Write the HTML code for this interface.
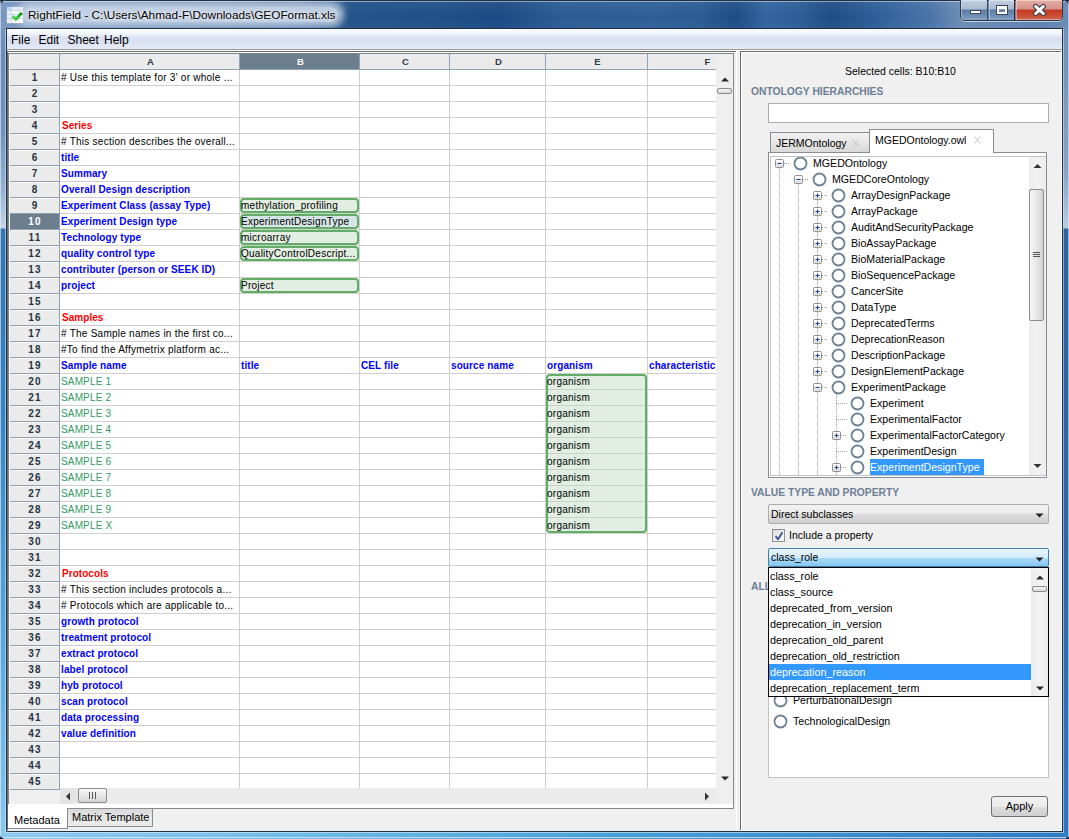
<!DOCTYPE html><html><head><meta charset="utf-8"><title>RightField</title><style>
*{margin:0;padding:0;box-sizing:border-box}
html,body{width:1069px;height:839px;overflow:hidden;background:#1b2b40}
body{position:relative;font-family:"Liberation Sans", sans-serif;font-size:11px;color:#000}
.ab{position:absolute}
.t{position:absolute;white-space:nowrap;overflow:hidden}
</style></head><body>
<div class="ab" style="left:0;top:0;width:1069px;height:839px;border-radius:7px 7px 6px 6px;background:linear-gradient(180deg,#7b98c0 0px,#6a8db8 60px,#7092bc 130px,#98b2d4 190px,#c3d4e8 228px,#3674b2 229px,#3a82c0 400px,#5aa6dc 640px,#8ac8ee 839px);"></div>
<div class="ab" style="left:1062px;top:20px;width:7px;height:812px;background:linear-gradient(180deg,#6f8fb9 0px,#86a3c6 150px,#b8cbe2 208px,#2c62a0 209px,#2e67a6 500px,#3276b9 812px)"></div>
<div class="ab" style="left:0;top:831px;width:1069px;height:8px;border-radius:0 0 6px 6px;background:linear-gradient(90deg,#8ccaf0 0px,#7cc2ec 200px,#5fb0e2 420px,#4aa0d8 600px,#3f90cf 800px,#2f7cc0 1069px)"></div>
<div class="ab" style="left:0;top:1px;width:1px;height:836px;background:rgba(230,240,250,.6)"></div>
<div class="ab" style="left:1068px;top:1px;width:1px;height:836px;background:rgba(230,240,250,.6)"></div>
<div class="ab" style="left:5px;top:29px;width:1px;height:803px;background:rgba(220,235,250,.55)"></div>
<div class="ab" style="left:1063px;top:29px;width:1px;height:803px;background:rgba(220,235,250,.55)"></div>
<div class="ab" style="left:5px;top:832px;width:1059px;height:1px;background:rgba(220,235,250,.6)"></div>
<div class="ab" style="left:3px;top:837px;width:1063px;height:1px;background:rgba(230,240,250,.7)"></div>
<div class="ab" style="left:1px;top:1px;width:1067px;height:27px;border-radius:6px 6px 0 0;overflow:hidden;background:linear-gradient(90deg,#7995bd 0px,#6a89b3 150px,#4f75a6 300px,#225389 345px,#1f5088 430px,#1b4a84 500px,#2a5c93 560px,#2d5f96 650px,#2a5b92 700px,#1d4c84 735px,#3264a0 765px,#2b5c95 800px,#1e4c85 830px,#2f609a 880px,#4a74a8 930px,#6a8cb5 960px,#5d80ad 1040px,#6a8ab5 1067px);"><div class="ab" style="left:20px;top:6px;width:318px;height:15px;border-radius:8px;background:rgba(196,211,229,.92);box-shadow:0 0 7px 5px rgba(196,211,229,.85)"></div></div>
<div class="ab" style="left:1px;top:1px;width:1067px;height:27px;border-radius:6px 6px 0 0;background:linear-gradient(180deg,rgba(255,255,255,.06) 0px,rgba(255,255,255,.02) 10px,rgba(255,255,255,0) 16px,rgba(255,255,255,.03) 27px)"></div>
<div class="ab" style="left:4px;top:1px;width:1061px;height:1px;background:rgba(255,255,255,.45)"></div>
<div class="ab" style="left:7px;top:7px;width:16px;height:16px;background:#fbfcfe;box-shadow:0 0 0 .5px rgba(190,200,215,.6)"></div>
<div class="ab" style="left:7px;top:7px;width:4px;height:16px;background:#e8f0f9"></div>
<div class="ab" style="left:12px;top:7px;width:11px;height:3px;background:#e2edf9"></div>
<div class="ab" style="left:7px;top:7px;width:4px;height:3px;background:#b3d5fd"></div>
<div class="ab" style="left:7px;top:10px;width:16px;height:1px;background:#cad6e6"></div>
<div class="ab" style="left:7px;top:14px;width:16px;height:1px;background:#cad6e6"></div>
<div class="ab" style="left:7px;top:18px;width:16px;height:1px;background:#cad6e6"></div>
<div class="ab" style="left:11px;top:7px;width:1px;height:16px;background:#cad6e6"></div>
<svg class="ab" style="left:10px;top:10px" width="14" height="12" viewBox="0 0 14 12"><defs><linearGradient id="ck" x1="0" y1="0" x2="1" y2="0"><stop offset="0" stop-color="#52d852"/><stop offset=".5" stop-color="#3cc83c"/><stop offset="1" stop-color="#0d8d0d"/></linearGradient></defs><path d="M2.6 6.2 L5.9 9.3 L11.8 2.8" stroke="url(#ck)" stroke-width="3" fill="none" stroke-linejoin="round"/></svg>
<div class="t" style="left:28px;top:7px;height:16px;line-height:16px;font-size:11.8px;color:#000;text-shadow:0 0 6px #fff,0 0 3px rgba(255,255,255,.9)">RightField - C:\Users\Ahmad-F\Downloads\GEOFormat.xls</div>
<div class="ab" style="left:5px;top:0;width:1059px;height:1px;background:rgba(15,28,48,.85)"></div>
<div class="ab" style="left:960px;top:0;width:103px;height:21px;border:1px solid #2c3a4c;border-top:none;border-radius:0 0 5px 5px;overflow:hidden;box-shadow:0 1px 0 rgba(220,232,245,.75)"><div class="ab" style="left:0;top:0;width:27px;height:20px;background:linear-gradient(180deg,#c3d1e2 0,#a9bbd1 9px,#5d7da5 10px,#6f8fb5 16px,#86a4c6 20px);border-right:1px solid #34465a;box-shadow:inset 1px 1px 0 rgba(255,255,255,.35)"></div><div class="ab" style="left:28px;top:0;width:26px;height:20px;background:linear-gradient(180deg,#c3d1e2 0,#a9bbd1 9px,#5d7da5 10px,#6f8fb5 16px,#86a4c6 20px);border-right:1px solid #5a1a14;box-shadow:inset 1px 1px 0 rgba(255,255,255,.35)"></div><div class="ab" style="left:55px;top:0;width:47px;height:20px;background:linear-gradient(180deg,#e4aea4 0,#d6918a 9px,#c23a22 10px,#c94a30 15px,#cf6a54 20px);box-shadow:inset 1px 1px 0 rgba(255,255,255,.4),inset -1px -1px 0 rgba(255,255,255,.35)"></div></div>
<div class="ab" style="left:970px;top:10px;width:11px;height:4px;background:#fff;border:1px solid #384858"></div>
<div class="ab" style="left:996px;top:5px;width:12px;height:10px;background:transparent;border:1px solid #384858"></div>
<div class="ab" style="left:997px;top:6px;width:10px;height:8px;border:2px solid #fff;border-top-width:3px"></div>
<svg class="ab" style="left:1032px;top:3px" width="15" height="14" viewBox="0 0 15 14"><path d="M3.6 3.4 L11.4 10.6 M11.4 3.4 L3.6 10.6" stroke="#2e3440" stroke-width="5" stroke-linecap="round"/><path d="M3.6 3.4 L11.4 10.6 M11.4 3.4 L3.6 10.6" stroke="#fff" stroke-width="3" stroke-linecap="round"/></svg>
<div class="ab" style="left:6px;top:28px;width:1057px;height:804px;background:#1f3347;border-radius:1px"></div>
<div class="ab" style="left:7px;top:29px;width:1055px;height:802px;background:#f0f0f0"></div>
<div class="ab" style="left:7px;top:29px;width:1055px;height:20px;background:linear-gradient(180deg,#fbfcfe 0px,#f0f3fa 5px,#d8dff0 9px,#dbe2f2 14px,#e6ebf7 20px)"></div>
<div class="ab" style="left:7px;top:49px;width:1055px;height:1px;background:#9a9a9a"></div>
<div class="ab" style="left:7px;top:50px;width:1055px;height:1px;background:#ffffff"></div>
<div class="t" style="left:11px;top:32px;height:16px;line-height:16px;font-size:12px;color:#000">File</div>
<div class="t" style="left:38.5px;top:32px;height:16px;line-height:16px;font-size:12px;color:#000">Edit</div>
<div class="t" style="left:67.5px;top:32px;height:16px;line-height:16px;font-size:12px;color:#000">Sheet</div>
<div class="t" style="left:104px;top:32px;height:16px;line-height:16px;font-size:12px;color:#000">Help</div>
<div class="ab" style="left:7px;top:51px;width:730px;height:1px;background:#6b6b6b"></div>
<div class="ab" style="left:7px;top:51px;width:1px;height:779px;background:#6b6b6b"></div>
<div class="ab" style="left:736px;top:51px;width:1px;height:780px;background:#fff"></div>
<div class="ab" style="left:8px;top:52px;width:728px;height:1px;background:#fff"></div>
<div class="ab" style="left:8px;top:53px;width:726px;height:756px;border:1px solid #828790;background:#fff"></div>
<div class="ab" style="left:9px;top:54px;width:707px;height:734px;background:#fff"></div>
<div class="ab" style="left:9px;top:54px;width:707px;height:15px;background:#ebebeb"></div>
<div class="ab" style="left:9px;top:54px;width:50px;height:736px;background:#ebebeb"></div>
<div class="ab" style="left:9px;top:54px;width:1px;height:734px;background:#fafafa"></div>
<div class="ab" style="left:240px;top:54px;width:119px;height:15px;background:#6c7d8e"></div>
<div class="ab" style="left:10px;top:214px;width:49px;height:15px;background:#6c7d8e"></div>
<div class="ab" style="left:59px;top:54px;width:1px;height:15px;background:#8fa2b3"></div>
<div class="ab" style="left:239px;top:54px;width:1px;height:15px;background:#8fa2b3"></div>
<div class="ab" style="left:359px;top:54px;width:1px;height:15px;background:#8fa2b3"></div>
<div class="ab" style="left:449px;top:54px;width:1px;height:15px;background:#8fa2b3"></div>
<div class="ab" style="left:545px;top:54px;width:1px;height:15px;background:#8fa2b3"></div>
<div class="ab" style="left:647px;top:54px;width:1px;height:15px;background:#8fa2b3"></div>
<div class="ab" style="left:10px;top:69px;width:706px;height:1px;background:#8fa2b3"></div>
<div class="ab" style="left:59px;top:54px;width:1px;height:736px;background:#8fa2b3"></div>
<div class="ab" style="left:10px;top:85px;width:49px;height:1px;background:#8fa2b3"></div>
<div class="ab" style="left:10px;top:86px;width:49px;height:1px;background:#f6f6f6"></div>
<div class="ab" style="left:60px;top:85px;width:656px;height:1px;background:#cfcfcf"></div>
<div class="ab" style="left:10px;top:101px;width:49px;height:1px;background:#8fa2b3"></div>
<div class="ab" style="left:10px;top:102px;width:49px;height:1px;background:#f6f6f6"></div>
<div class="ab" style="left:60px;top:101px;width:656px;height:1px;background:#cfcfcf"></div>
<div class="ab" style="left:10px;top:117px;width:49px;height:1px;background:#8fa2b3"></div>
<div class="ab" style="left:10px;top:118px;width:49px;height:1px;background:#f6f6f6"></div>
<div class="ab" style="left:60px;top:117px;width:656px;height:1px;background:#cfcfcf"></div>
<div class="ab" style="left:10px;top:133px;width:49px;height:1px;background:#8fa2b3"></div>
<div class="ab" style="left:10px;top:134px;width:49px;height:1px;background:#f6f6f6"></div>
<div class="ab" style="left:60px;top:133px;width:656px;height:1px;background:#cfcfcf"></div>
<div class="ab" style="left:10px;top:149px;width:49px;height:1px;background:#8fa2b3"></div>
<div class="ab" style="left:10px;top:150px;width:49px;height:1px;background:#f6f6f6"></div>
<div class="ab" style="left:60px;top:149px;width:656px;height:1px;background:#cfcfcf"></div>
<div class="ab" style="left:10px;top:165px;width:49px;height:1px;background:#8fa2b3"></div>
<div class="ab" style="left:10px;top:166px;width:49px;height:1px;background:#f6f6f6"></div>
<div class="ab" style="left:60px;top:165px;width:656px;height:1px;background:#cfcfcf"></div>
<div class="ab" style="left:10px;top:181px;width:49px;height:1px;background:#8fa2b3"></div>
<div class="ab" style="left:10px;top:182px;width:49px;height:1px;background:#f6f6f6"></div>
<div class="ab" style="left:60px;top:181px;width:656px;height:1px;background:#cfcfcf"></div>
<div class="ab" style="left:10px;top:197px;width:49px;height:1px;background:#8fa2b3"></div>
<div class="ab" style="left:10px;top:198px;width:49px;height:1px;background:#f6f6f6"></div>
<div class="ab" style="left:60px;top:197px;width:656px;height:1px;background:#cfcfcf"></div>
<div class="ab" style="left:10px;top:213px;width:49px;height:1px;background:#8fa2b3"></div>
<div class="ab" style="left:60px;top:213px;width:656px;height:1px;background:#cfcfcf"></div>
<div class="ab" style="left:10px;top:229px;width:49px;height:1px;background:#8fa2b3"></div>
<div class="ab" style="left:10px;top:230px;width:49px;height:1px;background:#f6f6f6"></div>
<div class="ab" style="left:60px;top:229px;width:656px;height:1px;background:#cfcfcf"></div>
<div class="ab" style="left:10px;top:245px;width:49px;height:1px;background:#8fa2b3"></div>
<div class="ab" style="left:10px;top:246px;width:49px;height:1px;background:#f6f6f6"></div>
<div class="ab" style="left:60px;top:245px;width:656px;height:1px;background:#cfcfcf"></div>
<div class="ab" style="left:10px;top:261px;width:49px;height:1px;background:#8fa2b3"></div>
<div class="ab" style="left:10px;top:262px;width:49px;height:1px;background:#f6f6f6"></div>
<div class="ab" style="left:60px;top:261px;width:656px;height:1px;background:#cfcfcf"></div>
<div class="ab" style="left:10px;top:277px;width:49px;height:1px;background:#8fa2b3"></div>
<div class="ab" style="left:10px;top:278px;width:49px;height:1px;background:#f6f6f6"></div>
<div class="ab" style="left:60px;top:277px;width:656px;height:1px;background:#cfcfcf"></div>
<div class="ab" style="left:10px;top:293px;width:49px;height:1px;background:#8fa2b3"></div>
<div class="ab" style="left:10px;top:294px;width:49px;height:1px;background:#f6f6f6"></div>
<div class="ab" style="left:60px;top:293px;width:656px;height:1px;background:#cfcfcf"></div>
<div class="ab" style="left:10px;top:309px;width:49px;height:1px;background:#8fa2b3"></div>
<div class="ab" style="left:10px;top:310px;width:49px;height:1px;background:#f6f6f6"></div>
<div class="ab" style="left:60px;top:309px;width:656px;height:1px;background:#cfcfcf"></div>
<div class="ab" style="left:10px;top:325px;width:49px;height:1px;background:#8fa2b3"></div>
<div class="ab" style="left:10px;top:326px;width:49px;height:1px;background:#f6f6f6"></div>
<div class="ab" style="left:60px;top:325px;width:656px;height:1px;background:#cfcfcf"></div>
<div class="ab" style="left:10px;top:341px;width:49px;height:1px;background:#8fa2b3"></div>
<div class="ab" style="left:10px;top:342px;width:49px;height:1px;background:#f6f6f6"></div>
<div class="ab" style="left:60px;top:341px;width:656px;height:1px;background:#cfcfcf"></div>
<div class="ab" style="left:10px;top:357px;width:49px;height:1px;background:#8fa2b3"></div>
<div class="ab" style="left:10px;top:358px;width:49px;height:1px;background:#f6f6f6"></div>
<div class="ab" style="left:60px;top:357px;width:656px;height:1px;background:#cfcfcf"></div>
<div class="ab" style="left:10px;top:373px;width:49px;height:1px;background:#8fa2b3"></div>
<div class="ab" style="left:10px;top:374px;width:49px;height:1px;background:#f6f6f6"></div>
<div class="ab" style="left:60px;top:373px;width:656px;height:1px;background:#cfcfcf"></div>
<div class="ab" style="left:10px;top:389px;width:49px;height:1px;background:#8fa2b3"></div>
<div class="ab" style="left:10px;top:390px;width:49px;height:1px;background:#f6f6f6"></div>
<div class="ab" style="left:60px;top:389px;width:656px;height:1px;background:#cfcfcf"></div>
<div class="ab" style="left:10px;top:405px;width:49px;height:1px;background:#8fa2b3"></div>
<div class="ab" style="left:10px;top:406px;width:49px;height:1px;background:#f6f6f6"></div>
<div class="ab" style="left:60px;top:405px;width:656px;height:1px;background:#cfcfcf"></div>
<div class="ab" style="left:10px;top:421px;width:49px;height:1px;background:#8fa2b3"></div>
<div class="ab" style="left:10px;top:422px;width:49px;height:1px;background:#f6f6f6"></div>
<div class="ab" style="left:60px;top:421px;width:656px;height:1px;background:#cfcfcf"></div>
<div class="ab" style="left:10px;top:437px;width:49px;height:1px;background:#8fa2b3"></div>
<div class="ab" style="left:10px;top:438px;width:49px;height:1px;background:#f6f6f6"></div>
<div class="ab" style="left:60px;top:437px;width:656px;height:1px;background:#cfcfcf"></div>
<div class="ab" style="left:10px;top:453px;width:49px;height:1px;background:#8fa2b3"></div>
<div class="ab" style="left:10px;top:454px;width:49px;height:1px;background:#f6f6f6"></div>
<div class="ab" style="left:60px;top:453px;width:656px;height:1px;background:#cfcfcf"></div>
<div class="ab" style="left:10px;top:469px;width:49px;height:1px;background:#8fa2b3"></div>
<div class="ab" style="left:10px;top:470px;width:49px;height:1px;background:#f6f6f6"></div>
<div class="ab" style="left:60px;top:469px;width:656px;height:1px;background:#cfcfcf"></div>
<div class="ab" style="left:10px;top:485px;width:49px;height:1px;background:#8fa2b3"></div>
<div class="ab" style="left:10px;top:486px;width:49px;height:1px;background:#f6f6f6"></div>
<div class="ab" style="left:60px;top:485px;width:656px;height:1px;background:#cfcfcf"></div>
<div class="ab" style="left:10px;top:501px;width:49px;height:1px;background:#8fa2b3"></div>
<div class="ab" style="left:10px;top:502px;width:49px;height:1px;background:#f6f6f6"></div>
<div class="ab" style="left:60px;top:501px;width:656px;height:1px;background:#cfcfcf"></div>
<div class="ab" style="left:10px;top:517px;width:49px;height:1px;background:#8fa2b3"></div>
<div class="ab" style="left:10px;top:518px;width:49px;height:1px;background:#f6f6f6"></div>
<div class="ab" style="left:60px;top:517px;width:656px;height:1px;background:#cfcfcf"></div>
<div class="ab" style="left:10px;top:533px;width:49px;height:1px;background:#8fa2b3"></div>
<div class="ab" style="left:10px;top:534px;width:49px;height:1px;background:#f6f6f6"></div>
<div class="ab" style="left:60px;top:533px;width:656px;height:1px;background:#cfcfcf"></div>
<div class="ab" style="left:10px;top:549px;width:49px;height:1px;background:#8fa2b3"></div>
<div class="ab" style="left:10px;top:550px;width:49px;height:1px;background:#f6f6f6"></div>
<div class="ab" style="left:60px;top:549px;width:656px;height:1px;background:#cfcfcf"></div>
<div class="ab" style="left:10px;top:565px;width:49px;height:1px;background:#8fa2b3"></div>
<div class="ab" style="left:10px;top:566px;width:49px;height:1px;background:#f6f6f6"></div>
<div class="ab" style="left:60px;top:565px;width:656px;height:1px;background:#cfcfcf"></div>
<div class="ab" style="left:10px;top:581px;width:49px;height:1px;background:#8fa2b3"></div>
<div class="ab" style="left:10px;top:582px;width:49px;height:1px;background:#f6f6f6"></div>
<div class="ab" style="left:60px;top:581px;width:656px;height:1px;background:#cfcfcf"></div>
<div class="ab" style="left:10px;top:597px;width:49px;height:1px;background:#8fa2b3"></div>
<div class="ab" style="left:10px;top:598px;width:49px;height:1px;background:#f6f6f6"></div>
<div class="ab" style="left:60px;top:597px;width:656px;height:1px;background:#cfcfcf"></div>
<div class="ab" style="left:10px;top:613px;width:49px;height:1px;background:#8fa2b3"></div>
<div class="ab" style="left:10px;top:614px;width:49px;height:1px;background:#f6f6f6"></div>
<div class="ab" style="left:60px;top:613px;width:656px;height:1px;background:#cfcfcf"></div>
<div class="ab" style="left:10px;top:629px;width:49px;height:1px;background:#8fa2b3"></div>
<div class="ab" style="left:10px;top:630px;width:49px;height:1px;background:#f6f6f6"></div>
<div class="ab" style="left:60px;top:629px;width:656px;height:1px;background:#cfcfcf"></div>
<div class="ab" style="left:10px;top:645px;width:49px;height:1px;background:#8fa2b3"></div>
<div class="ab" style="left:10px;top:646px;width:49px;height:1px;background:#f6f6f6"></div>
<div class="ab" style="left:60px;top:645px;width:656px;height:1px;background:#cfcfcf"></div>
<div class="ab" style="left:10px;top:661px;width:49px;height:1px;background:#8fa2b3"></div>
<div class="ab" style="left:10px;top:662px;width:49px;height:1px;background:#f6f6f6"></div>
<div class="ab" style="left:60px;top:661px;width:656px;height:1px;background:#cfcfcf"></div>
<div class="ab" style="left:10px;top:677px;width:49px;height:1px;background:#8fa2b3"></div>
<div class="ab" style="left:10px;top:678px;width:49px;height:1px;background:#f6f6f6"></div>
<div class="ab" style="left:60px;top:677px;width:656px;height:1px;background:#cfcfcf"></div>
<div class="ab" style="left:10px;top:693px;width:49px;height:1px;background:#8fa2b3"></div>
<div class="ab" style="left:10px;top:694px;width:49px;height:1px;background:#f6f6f6"></div>
<div class="ab" style="left:60px;top:693px;width:656px;height:1px;background:#cfcfcf"></div>
<div class="ab" style="left:10px;top:709px;width:49px;height:1px;background:#8fa2b3"></div>
<div class="ab" style="left:10px;top:710px;width:49px;height:1px;background:#f6f6f6"></div>
<div class="ab" style="left:60px;top:709px;width:656px;height:1px;background:#cfcfcf"></div>
<div class="ab" style="left:10px;top:725px;width:49px;height:1px;background:#8fa2b3"></div>
<div class="ab" style="left:10px;top:726px;width:49px;height:1px;background:#f6f6f6"></div>
<div class="ab" style="left:60px;top:725px;width:656px;height:1px;background:#cfcfcf"></div>
<div class="ab" style="left:10px;top:741px;width:49px;height:1px;background:#8fa2b3"></div>
<div class="ab" style="left:10px;top:742px;width:49px;height:1px;background:#f6f6f6"></div>
<div class="ab" style="left:60px;top:741px;width:656px;height:1px;background:#cfcfcf"></div>
<div class="ab" style="left:10px;top:757px;width:49px;height:1px;background:#8fa2b3"></div>
<div class="ab" style="left:10px;top:758px;width:49px;height:1px;background:#f6f6f6"></div>
<div class="ab" style="left:60px;top:757px;width:656px;height:1px;background:#cfcfcf"></div>
<div class="ab" style="left:10px;top:773px;width:49px;height:1px;background:#8fa2b3"></div>
<div class="ab" style="left:10px;top:774px;width:49px;height:1px;background:#f6f6f6"></div>
<div class="ab" style="left:60px;top:773px;width:656px;height:1px;background:#cfcfcf"></div>
<div class="ab" style="left:10px;top:789px;width:49px;height:1px;background:#8fa2b3"></div>
<div class="ab" style="left:239px;top:70px;width:1px;height:718px;background:#cfcfcf"></div>
<div class="ab" style="left:359px;top:70px;width:1px;height:718px;background:#cfcfcf"></div>
<div class="ab" style="left:449px;top:70px;width:1px;height:718px;background:#cfcfcf"></div>
<div class="ab" style="left:545px;top:70px;width:1px;height:718px;background:#cfcfcf"></div>
<div class="ab" style="left:647px;top:70px;width:1px;height:718px;background:#cfcfcf"></div>
<div class="t" style="left:61px;top:54px;width:179px;height:15px;line-height:15px;font-size:9.5px;font-weight:bold;color:#2b3b4c;text-align:center">A</div>
<div class="t" style="left:241px;top:54px;width:119px;height:15px;line-height:15px;font-size:9.5px;font-weight:bold;color:#fff;text-align:center">B</div>
<div class="t" style="left:361px;top:54px;width:89px;height:15px;line-height:15px;font-size:9.5px;font-weight:bold;color:#2b3b4c;text-align:center">C</div>
<div class="t" style="left:451px;top:54px;width:95px;height:15px;line-height:15px;font-size:9.5px;font-weight:bold;color:#2b3b4c;text-align:center">D</div>
<div class="t" style="left:547px;top:54px;width:101px;height:15px;line-height:15px;font-size:9.5px;font-weight:bold;color:#2b3b4c;text-align:center">E</div>
<div class="t" style="left:694px;top:54px;width:27px;height:15px;line-height:15px;font-size:9.5px;font-weight:bold;color:#2b3b4c;text-align:center">F</div>
<div class="t" style="left:10px;top:70px;width:49px;height:15px;line-height:15px;font-size:10px;font-weight:bold;color:#243444;text-align:center;letter-spacing:1.2px;text-indent:1.2px">1</div>
<div class="t" style="left:10px;top:86px;width:49px;height:15px;line-height:15px;font-size:10px;font-weight:bold;color:#243444;text-align:center;letter-spacing:1.2px;text-indent:1.2px">2</div>
<div class="t" style="left:10px;top:102px;width:49px;height:15px;line-height:15px;font-size:10px;font-weight:bold;color:#243444;text-align:center;letter-spacing:1.2px;text-indent:1.2px">3</div>
<div class="t" style="left:10px;top:118px;width:49px;height:15px;line-height:15px;font-size:10px;font-weight:bold;color:#243444;text-align:center;letter-spacing:1.2px;text-indent:1.2px">4</div>
<div class="t" style="left:10px;top:134px;width:49px;height:15px;line-height:15px;font-size:10px;font-weight:bold;color:#243444;text-align:center;letter-spacing:1.2px;text-indent:1.2px">5</div>
<div class="t" style="left:10px;top:150px;width:49px;height:15px;line-height:15px;font-size:10px;font-weight:bold;color:#243444;text-align:center;letter-spacing:1.2px;text-indent:1.2px">6</div>
<div class="t" style="left:10px;top:166px;width:49px;height:15px;line-height:15px;font-size:10px;font-weight:bold;color:#243444;text-align:center;letter-spacing:1.2px;text-indent:1.2px">7</div>
<div class="t" style="left:10px;top:182px;width:49px;height:15px;line-height:15px;font-size:10px;font-weight:bold;color:#243444;text-align:center;letter-spacing:1.2px;text-indent:1.2px">8</div>
<div class="t" style="left:10px;top:198px;width:49px;height:15px;line-height:15px;font-size:10px;font-weight:bold;color:#243444;text-align:center;letter-spacing:1.2px;text-indent:1.2px">9</div>
<div class="t" style="left:10px;top:214px;width:49px;height:15px;line-height:15px;font-size:10px;font-weight:bold;color:#fff;text-align:center;letter-spacing:1.2px;text-indent:1.2px">10</div>
<div class="t" style="left:10px;top:230px;width:49px;height:15px;line-height:15px;font-size:10px;font-weight:bold;color:#243444;text-align:center;letter-spacing:1.2px;text-indent:1.2px">11</div>
<div class="t" style="left:10px;top:246px;width:49px;height:15px;line-height:15px;font-size:10px;font-weight:bold;color:#243444;text-align:center;letter-spacing:1.2px;text-indent:1.2px">12</div>
<div class="t" style="left:10px;top:262px;width:49px;height:15px;line-height:15px;font-size:10px;font-weight:bold;color:#243444;text-align:center;letter-spacing:1.2px;text-indent:1.2px">13</div>
<div class="t" style="left:10px;top:278px;width:49px;height:15px;line-height:15px;font-size:10px;font-weight:bold;color:#243444;text-align:center;letter-spacing:1.2px;text-indent:1.2px">14</div>
<div class="t" style="left:10px;top:294px;width:49px;height:15px;line-height:15px;font-size:10px;font-weight:bold;color:#243444;text-align:center;letter-spacing:1.2px;text-indent:1.2px">15</div>
<div class="t" style="left:10px;top:310px;width:49px;height:15px;line-height:15px;font-size:10px;font-weight:bold;color:#243444;text-align:center;letter-spacing:1.2px;text-indent:1.2px">16</div>
<div class="t" style="left:10px;top:326px;width:49px;height:15px;line-height:15px;font-size:10px;font-weight:bold;color:#243444;text-align:center;letter-spacing:1.2px;text-indent:1.2px">17</div>
<div class="t" style="left:10px;top:342px;width:49px;height:15px;line-height:15px;font-size:10px;font-weight:bold;color:#243444;text-align:center;letter-spacing:1.2px;text-indent:1.2px">18</div>
<div class="t" style="left:10px;top:358px;width:49px;height:15px;line-height:15px;font-size:10px;font-weight:bold;color:#243444;text-align:center;letter-spacing:1.2px;text-indent:1.2px">19</div>
<div class="t" style="left:10px;top:374px;width:49px;height:15px;line-height:15px;font-size:10px;font-weight:bold;color:#243444;text-align:center;letter-spacing:1.2px;text-indent:1.2px">20</div>
<div class="t" style="left:10px;top:390px;width:49px;height:15px;line-height:15px;font-size:10px;font-weight:bold;color:#243444;text-align:center;letter-spacing:1.2px;text-indent:1.2px">21</div>
<div class="t" style="left:10px;top:406px;width:49px;height:15px;line-height:15px;font-size:10px;font-weight:bold;color:#243444;text-align:center;letter-spacing:1.2px;text-indent:1.2px">22</div>
<div class="t" style="left:10px;top:422px;width:49px;height:15px;line-height:15px;font-size:10px;font-weight:bold;color:#243444;text-align:center;letter-spacing:1.2px;text-indent:1.2px">23</div>
<div class="t" style="left:10px;top:438px;width:49px;height:15px;line-height:15px;font-size:10px;font-weight:bold;color:#243444;text-align:center;letter-spacing:1.2px;text-indent:1.2px">24</div>
<div class="t" style="left:10px;top:454px;width:49px;height:15px;line-height:15px;font-size:10px;font-weight:bold;color:#243444;text-align:center;letter-spacing:1.2px;text-indent:1.2px">25</div>
<div class="t" style="left:10px;top:470px;width:49px;height:15px;line-height:15px;font-size:10px;font-weight:bold;color:#243444;text-align:center;letter-spacing:1.2px;text-indent:1.2px">26</div>
<div class="t" style="left:10px;top:486px;width:49px;height:15px;line-height:15px;font-size:10px;font-weight:bold;color:#243444;text-align:center;letter-spacing:1.2px;text-indent:1.2px">27</div>
<div class="t" style="left:10px;top:502px;width:49px;height:15px;line-height:15px;font-size:10px;font-weight:bold;color:#243444;text-align:center;letter-spacing:1.2px;text-indent:1.2px">28</div>
<div class="t" style="left:10px;top:518px;width:49px;height:15px;line-height:15px;font-size:10px;font-weight:bold;color:#243444;text-align:center;letter-spacing:1.2px;text-indent:1.2px">29</div>
<div class="t" style="left:10px;top:534px;width:49px;height:15px;line-height:15px;font-size:10px;font-weight:bold;color:#243444;text-align:center;letter-spacing:1.2px;text-indent:1.2px">30</div>
<div class="t" style="left:10px;top:550px;width:49px;height:15px;line-height:15px;font-size:10px;font-weight:bold;color:#243444;text-align:center;letter-spacing:1.2px;text-indent:1.2px">31</div>
<div class="t" style="left:10px;top:566px;width:49px;height:15px;line-height:15px;font-size:10px;font-weight:bold;color:#243444;text-align:center;letter-spacing:1.2px;text-indent:1.2px">32</div>
<div class="t" style="left:10px;top:582px;width:49px;height:15px;line-height:15px;font-size:10px;font-weight:bold;color:#243444;text-align:center;letter-spacing:1.2px;text-indent:1.2px">33</div>
<div class="t" style="left:10px;top:598px;width:49px;height:15px;line-height:15px;font-size:10px;font-weight:bold;color:#243444;text-align:center;letter-spacing:1.2px;text-indent:1.2px">34</div>
<div class="t" style="left:10px;top:614px;width:49px;height:15px;line-height:15px;font-size:10px;font-weight:bold;color:#243444;text-align:center;letter-spacing:1.2px;text-indent:1.2px">35</div>
<div class="t" style="left:10px;top:630px;width:49px;height:15px;line-height:15px;font-size:10px;font-weight:bold;color:#243444;text-align:center;letter-spacing:1.2px;text-indent:1.2px">36</div>
<div class="t" style="left:10px;top:646px;width:49px;height:15px;line-height:15px;font-size:10px;font-weight:bold;color:#243444;text-align:center;letter-spacing:1.2px;text-indent:1.2px">37</div>
<div class="t" style="left:10px;top:662px;width:49px;height:15px;line-height:15px;font-size:10px;font-weight:bold;color:#243444;text-align:center;letter-spacing:1.2px;text-indent:1.2px">38</div>
<div class="t" style="left:10px;top:678px;width:49px;height:15px;line-height:15px;font-size:10px;font-weight:bold;color:#243444;text-align:center;letter-spacing:1.2px;text-indent:1.2px">39</div>
<div class="t" style="left:10px;top:694px;width:49px;height:15px;line-height:15px;font-size:10px;font-weight:bold;color:#243444;text-align:center;letter-spacing:1.2px;text-indent:1.2px">40</div>
<div class="t" style="left:10px;top:710px;width:49px;height:15px;line-height:15px;font-size:10px;font-weight:bold;color:#243444;text-align:center;letter-spacing:1.2px;text-indent:1.2px">41</div>
<div class="t" style="left:10px;top:726px;width:49px;height:15px;line-height:15px;font-size:10px;font-weight:bold;color:#243444;text-align:center;letter-spacing:1.2px;text-indent:1.2px">42</div>
<div class="t" style="left:10px;top:742px;width:49px;height:15px;line-height:15px;font-size:10px;font-weight:bold;color:#243444;text-align:center;letter-spacing:1.2px;text-indent:1.2px">43</div>
<div class="t" style="left:10px;top:758px;width:49px;height:15px;line-height:15px;font-size:10px;font-weight:bold;color:#243444;text-align:center;letter-spacing:1.2px;text-indent:1.2px">44</div>
<div class="t" style="left:10px;top:774px;width:49px;height:15px;line-height:15px;font-size:10px;font-weight:bold;color:#243444;text-align:center;letter-spacing:1.2px;text-indent:1.2px">45</div>
<div class="ab" style="left:240px;top:198px;width:119px;height:15px;border:2px solid #62ad66;border-radius:4px;background:#e2eee2"></div>
<div class="ab" style="left:240px;top:230px;width:119px;height:15px;border:2px solid #62ad66;border-radius:4px;background:#e2eee2"></div>
<div class="ab" style="left:240px;top:246px;width:119px;height:15px;border:2px solid #62ad66;border-radius:4px;background:#e2eee2"></div>
<div class="ab" style="left:240px;top:278px;width:119px;height:15px;border:2px solid #62ad66;border-radius:4px;background:#e2eee2"></div>
<div class="ab" style="left:240px;top:214px;width:119px;height:15px;border:2px solid #62ad66;border-radius:4px;background:#d6e6e6"></div>
<div class="ab" style="left:546px;top:374px;width:101px;height:159px;border:2px solid #62ad66;border-radius:4px;background:#e2eee2"></div>
<div class="ab" style="left:548px;top:389px;width:97px;height:1px;background:#c5d2c5"></div>
<div class="ab" style="left:548px;top:405px;width:97px;height:1px;background:#c5d2c5"></div>
<div class="ab" style="left:548px;top:421px;width:97px;height:1px;background:#c5d2c5"></div>
<div class="ab" style="left:548px;top:437px;width:97px;height:1px;background:#c5d2c5"></div>
<div class="ab" style="left:548px;top:453px;width:97px;height:1px;background:#c5d2c5"></div>
<div class="ab" style="left:548px;top:469px;width:97px;height:1px;background:#c5d2c5"></div>
<div class="ab" style="left:548px;top:485px;width:97px;height:1px;background:#c5d2c5"></div>
<div class="ab" style="left:548px;top:501px;width:97px;height:1px;background:#c5d2c5"></div>
<div class="ab" style="left:548px;top:517px;width:97px;height:1px;background:#c5d2c5"></div>
<div class="t" style="left:61px;top:70px;width:178px;height:15px;line-height:15px;font-size:10px;letter-spacing:.25px;color:#000"># Use this template for 3&#39; or whole ...</div>
<div class="t" style="left:62px;top:118px;width:178px;height:15px;line-height:15px;font-size:10px;font-weight:bold;color:#ff0000;letter-spacing:.05px">Series</div>
<div class="t" style="left:61px;top:134px;width:178px;height:15px;line-height:15px;font-size:10px;letter-spacing:.25px;color:#000"># This section describes the overall...</div>
<div class="t" style="left:61px;top:150px;width:178px;height:15px;line-height:15px;font-size:10px;font-weight:bold;color:#0000ff;letter-spacing:.1px">title</div>
<div class="t" style="left:61px;top:166px;width:178px;height:15px;line-height:15px;font-size:10px;font-weight:bold;color:#0000ff;letter-spacing:.1px">Summary</div>
<div class="t" style="left:61px;top:182px;width:178px;height:15px;line-height:15px;font-size:10px;font-weight:bold;color:#0000ff;letter-spacing:.1px">Overall Design description</div>
<div class="t" style="left:61px;top:198px;width:178px;height:15px;line-height:15px;font-size:10px;font-weight:bold;color:#0000ff;letter-spacing:.1px">Experiment Class (assay Type)</div>
<div class="t" style="left:241px;top:198px;width:118px;height:15px;line-height:15px;font-size:10px;letter-spacing:.25px;color:#000">methylation_profiling</div>
<div class="t" style="left:61px;top:214px;width:178px;height:15px;line-height:15px;font-size:10px;font-weight:bold;color:#0000ff;letter-spacing:.1px">Experiment Design type</div>
<div class="t" style="left:241px;top:214px;width:118px;height:15px;line-height:15px;font-size:10px;letter-spacing:.25px;color:#000">ExperimentDesignType</div>
<div class="t" style="left:61px;top:230px;width:178px;height:15px;line-height:15px;font-size:10px;font-weight:bold;color:#0000ff;letter-spacing:.1px">Technology type</div>
<div class="t" style="left:241px;top:230px;width:118px;height:15px;line-height:15px;font-size:10px;letter-spacing:.25px;color:#000">microarray</div>
<div class="t" style="left:61px;top:246px;width:178px;height:15px;line-height:15px;font-size:10px;font-weight:bold;color:#0000ff;letter-spacing:.1px">quality control type</div>
<div class="t" style="left:241px;top:246px;width:118px;height:15px;line-height:15px;font-size:10px;letter-spacing:.25px;color:#000">QualityControlDescript...</div>
<div class="t" style="left:61px;top:262px;width:178px;height:15px;line-height:15px;font-size:10px;font-weight:bold;color:#0000ff;letter-spacing:.1px">contributer (person or SEEK ID)</div>
<div class="t" style="left:61px;top:278px;width:178px;height:15px;line-height:15px;font-size:10px;font-weight:bold;color:#0000ff;letter-spacing:.1px">project</div>
<div class="t" style="left:241px;top:278px;width:118px;height:15px;line-height:15px;font-size:10px;letter-spacing:.25px;color:#000">Project</div>
<div class="t" style="left:62px;top:310px;width:178px;height:15px;line-height:15px;font-size:10px;font-weight:bold;color:#ff0000;letter-spacing:.05px">Samples</div>
<div class="t" style="left:61px;top:326px;width:178px;height:15px;line-height:15px;font-size:10px;letter-spacing:.25px;color:#000"># The Sample names in the first co...</div>
<div class="t" style="left:61px;top:342px;width:178px;height:15px;line-height:15px;font-size:10px;letter-spacing:.25px;color:#000">#To find the Affymetrix platform ac...</div>
<div class="t" style="left:61px;top:358px;width:178px;height:15px;line-height:15px;font-size:10px;font-weight:bold;color:#0000ff;letter-spacing:.1px">Sample name</div>
<div class="t" style="left:241px;top:358px;width:118px;height:15px;line-height:15px;font-size:10px;font-weight:bold;color:#0000ff;letter-spacing:.1px">title</div>
<div class="t" style="left:361px;top:358px;width:88px;height:15px;line-height:15px;font-size:10px;font-weight:bold;color:#0000ff;letter-spacing:.1px">CEL file</div>
<div class="t" style="left:451px;top:358px;width:94px;height:15px;line-height:15px;font-size:10px;font-weight:bold;color:#0000ff;letter-spacing:.1px">source name</div>
<div class="t" style="left:547px;top:358px;width:100px;height:15px;line-height:15px;font-size:10px;font-weight:bold;color:#0000ff;letter-spacing:.1px">organism</div>
<div class="t" style="left:649px;top:358px;width:68px;height:15px;line-height:15px;font-size:10px;font-weight:bold;color:#0000ff;letter-spacing:.1px">characteristic</div>
<div class="t" style="left:62px;top:566px;width:178px;height:15px;line-height:15px;font-size:10px;font-weight:bold;color:#ff0000;letter-spacing:.05px">Protocols</div>
<div class="t" style="left:61px;top:582px;width:178px;height:15px;line-height:15px;font-size:10px;letter-spacing:.25px;color:#000"># This section includes protocols a...</div>
<div class="t" style="left:61px;top:598px;width:178px;height:15px;line-height:15px;font-size:10px;letter-spacing:.25px;color:#000"># Protocols which are applicable to...</div>
<div class="t" style="left:61px;top:614px;width:178px;height:15px;line-height:15px;font-size:10px;font-weight:bold;color:#0000ff;letter-spacing:.1px">growth protocol</div>
<div class="t" style="left:61px;top:630px;width:178px;height:15px;line-height:15px;font-size:10px;font-weight:bold;color:#0000ff;letter-spacing:.1px">treatment protocol</div>
<div class="t" style="left:61px;top:646px;width:178px;height:15px;line-height:15px;font-size:10px;font-weight:bold;color:#0000ff;letter-spacing:.1px">extract protocol</div>
<div class="t" style="left:61px;top:662px;width:178px;height:15px;line-height:15px;font-size:10px;font-weight:bold;color:#0000ff;letter-spacing:.1px">label protocol</div>
<div class="t" style="left:61px;top:678px;width:178px;height:15px;line-height:15px;font-size:10px;font-weight:bold;color:#0000ff;letter-spacing:.1px">hyb protocol</div>
<div class="t" style="left:61px;top:694px;width:178px;height:15px;line-height:15px;font-size:10px;font-weight:bold;color:#0000ff;letter-spacing:.1px">scan protocol</div>
<div class="t" style="left:61px;top:710px;width:178px;height:15px;line-height:15px;font-size:10px;font-weight:bold;color:#0000ff;letter-spacing:.1px">data processing</div>
<div class="t" style="left:61px;top:726px;width:178px;height:15px;line-height:15px;font-size:10px;font-weight:bold;color:#0000ff;letter-spacing:.1px">value definition</div>
<div class="t" style="left:61px;top:374px;width:178px;height:15px;line-height:15px;font-size:10px;letter-spacing:.15px;color:#339966">SAMPLE 1</div>
<div class="t" style="left:547px;top:374px;width:100px;height:15px;line-height:15px;font-size:10px;letter-spacing:.25px;color:#000">organism</div>
<div class="t" style="left:61px;top:390px;width:178px;height:15px;line-height:15px;font-size:10px;letter-spacing:.15px;color:#339966">SAMPLE 2</div>
<div class="t" style="left:547px;top:390px;width:100px;height:15px;line-height:15px;font-size:10px;letter-spacing:.25px;color:#000">organism</div>
<div class="t" style="left:61px;top:406px;width:178px;height:15px;line-height:15px;font-size:10px;letter-spacing:.15px;color:#339966">SAMPLE 3</div>
<div class="t" style="left:547px;top:406px;width:100px;height:15px;line-height:15px;font-size:10px;letter-spacing:.25px;color:#000">organism</div>
<div class="t" style="left:61px;top:422px;width:178px;height:15px;line-height:15px;font-size:10px;letter-spacing:.15px;color:#339966">SAMPLE 4</div>
<div class="t" style="left:547px;top:422px;width:100px;height:15px;line-height:15px;font-size:10px;letter-spacing:.25px;color:#000">organism</div>
<div class="t" style="left:61px;top:438px;width:178px;height:15px;line-height:15px;font-size:10px;letter-spacing:.15px;color:#339966">SAMPLE 5</div>
<div class="t" style="left:547px;top:438px;width:100px;height:15px;line-height:15px;font-size:10px;letter-spacing:.25px;color:#000">organism</div>
<div class="t" style="left:61px;top:454px;width:178px;height:15px;line-height:15px;font-size:10px;letter-spacing:.15px;color:#339966">SAMPLE 6</div>
<div class="t" style="left:547px;top:454px;width:100px;height:15px;line-height:15px;font-size:10px;letter-spacing:.25px;color:#000">organism</div>
<div class="t" style="left:61px;top:470px;width:178px;height:15px;line-height:15px;font-size:10px;letter-spacing:.15px;color:#339966">SAMPLE 7</div>
<div class="t" style="left:547px;top:470px;width:100px;height:15px;line-height:15px;font-size:10px;letter-spacing:.25px;color:#000">organism</div>
<div class="t" style="left:61px;top:486px;width:178px;height:15px;line-height:15px;font-size:10px;letter-spacing:.15px;color:#339966">SAMPLE 8</div>
<div class="t" style="left:547px;top:486px;width:100px;height:15px;line-height:15px;font-size:10px;letter-spacing:.25px;color:#000">organism</div>
<div class="t" style="left:61px;top:502px;width:178px;height:15px;line-height:15px;font-size:10px;letter-spacing:.15px;color:#339966">SAMPLE 9</div>
<div class="t" style="left:547px;top:502px;width:100px;height:15px;line-height:15px;font-size:10px;letter-spacing:.25px;color:#000">organism</div>
<div class="t" style="left:61px;top:518px;width:178px;height:15px;line-height:15px;font-size:10px;letter-spacing:.15px;color:#339966">SAMPLE X</div>
<div class="t" style="left:547px;top:518px;width:100px;height:15px;line-height:15px;font-size:10px;letter-spacing:.25px;color:#000">organism</div>
<div class="ab" style="left:716px;top:54px;width:17px;height:734px;background:#efefef"></div>
<svg class="ab" style="left:721px;top:77px" width="8" height="5"><path d="M0 4.5 L4 0.5 L8 4.5 Z" fill="#2a2a2a"/></svg>
<div class="ab" style="left:717px;top:88px;width:15px;height:6px;border:1px solid #8b8b8b;border-radius:2px;background:linear-gradient(180deg,#f6f6f6,#d6d6d6)"></div>
<svg class="ab" style="left:721px;top:776px" width="8" height="5"><path d="M0 0.5 L4 4.5 L8 0.5 Z" fill="#2a2a2a"/></svg>
<div class="ab" style="left:9px;top:790px;width:51px;height:14px;background:#efefef"></div>
<div class="ab" style="left:60px;top:788px;width:656px;height:16px;background:#ebebeb"></div><div class="ab" style="left:60px;top:788px;width:18px;height:16px;background:#e4e4e4"></div>
<svg class="ab" style="left:65px;top:792px" width="6" height="9"><path d="M5 0.5 L1 4.5 L5 8.5 Z" fill="#333"/></svg>
<div class="ab" style="left:78px;top:788px;width:29px;height:15px;border:1px solid #8b8b8b;border-radius:2px;background:linear-gradient(180deg,#f6f6f6,#e8e8e8 50%,#d4d4d4)"></div>
<div class="ab" style="left:89px;top:792px;width:1px;height:7px;background:#555"></div>
<div class="ab" style="left:92px;top:792px;width:1px;height:7px;background:#555"></div>
<div class="ab" style="left:95px;top:792px;width:1px;height:7px;background:#555"></div>
<svg class="ab" style="left:704px;top:792px" width="6" height="9"><path d="M1 0.5 L5 4.5 L1 8.5 Z" fill="#333"/></svg>
<div class="ab" style="left:716px;top:788px;width:17px;height:16px;background:#efefef"></div>
<div class="ab" style="left:9px;top:804px;width:724px;height:4px;background:#fff"></div>
<div class="ab" style="left:8px;top:809px;width:728px;height:21px;background:#f0f0f0"></div>
<div class="ab" style="left:8px;top:804px;width:59px;height:25px;background:#fff;border-left:1px solid #fff"></div>
<div class="ab" style="left:8px;top:828px;width:60px;height:1px;background:#898c95"></div>
<div class="ab" style="left:67px;top:808px;width:1px;height:21px;background:#898c95"></div>
<div class="t" style="left:14px;top:813px;height:14px;line-height:14px;font-size:11px;color:#000">Metadata</div>
<div class="ab" style="left:68px;top:808px;width:85px;height:19px;border:1px solid #898c95;border-left:none;background:linear-gradient(180deg,#d9d9d9,#e6e6e6 50%,#ececec)"></div>
<div class="t" style="left:72px;top:810px;height:14px;line-height:14px;font-size:11px;color:#000">Matrix Template</div>
<div class="ab" style="left:740px;top:51px;width:321px;height:1px;background:#6b6b6b"></div>
<div class="ab" style="left:740px;top:51px;width:1px;height:779px;background:#6b6b6b"></div>
<div class="ab" style="left:741px;top:52px;width:1px;height:778px;background:#fff"></div>
<div class="ab" style="left:741px;top:52px;width:320px;height:1px;background:#fff"></div>
<div class="ab" style="left:1061px;top:51px;width:1px;height:780px;background:#fff"></div>
<div class="ab" style="left:740px;top:830px;width:322px;height:1px;background:#fff"></div>
<div class="t" style="left:845px;top:64px;height:14px;line-height:14px;font-size:10.5px;color:#000">Selected cells: B10:B10</div>
<div class="t" style="left:751px;top:85px;height:14px;line-height:14px;font-size:10.3px;font-weight:bold;color:#6d7f96">ONTOLOGY HIERARCHIES</div>
<div class="ab" style="left:768px;top:103px;width:281px;height:20px;border:1px solid #abadb3;border-top-color:#abadb3;background:#fff"></div>
<div class="ab" style="left:770px;top:132px;width:100px;height:20px;border:1px solid #898c95;border-bottom:none;background:linear-gradient(180deg,#f2f2f2,#e6e6e6 50%,#d9d9d9)"></div>
<div class="t" style="left:776px;top:136px;height:14px;line-height:14px;font-size:10.5px;color:#000">JERMOntology</div>
<svg class="ab" style="left:852px;top:139px" width="7" height="8"><path d="M0.5 0.5 L6.5 7.5 M6.5 0.5 L0.5 7.5" stroke="#c0c0c0" stroke-width="1"/></svg>
<div class="ab" style="left:869px;top:129px;width:125px;height:24px;border:1px solid #898c95;border-bottom:none;background:#fff"></div>
<div class="t" style="left:875px;top:133px;height:14px;line-height:14px;font-size:10.5px;color:#000">MGEDOntology.owl</div>
<svg class="ab" style="left:974px;top:136px" width="7" height="8"><path d="M0.5 0.5 L6.5 7.5 M6.5 0.5 L0.5 7.5" stroke="#c0c0c0" stroke-width="1"/></svg>
<div class="ab" style="left:768px;top:152px;width:279px;height:326px;border:1px solid #898c95;background:#fff"></div>
<div class="ab" style="left:870px;top:152px;width:123px;height:1px;background:#fff"></div>
<div class="ab" style="left:770px;top:156px;width:276px;height:320px;border:1px solid #c4c4c4;border-right:none;background:#fff"></div>
<div class="ab" style="left:1029px;top:157px;width:17px;height:318px;background:linear-gradient(90deg,#ececec,#f2f2f2 50%,#ececec)"></div>
<svg class="ab" style="left:1033px;top:163px" width="9" height="6"><path d="M0.5 5 L4.5 1 L8.5 5 Z" fill="#333"/></svg>
<div class="ab" style="left:1029px;top:189px;width:15px;height:132px;border:1px solid #8b8b8b;border-radius:2px;background:linear-gradient(90deg,#f6f6f6,#e8e8e8 50%,#d2d2d2)"></div>
<div class="ab" style="left:1033px;top:252px;width:7px;height:1px;background:#555"></div>
<div class="ab" style="left:1033px;top:254px;width:7px;height:1px;background:#555"></div>
<div class="ab" style="left:1033px;top:256px;width:7px;height:1px;background:#555"></div>
<svg class="ab" style="left:1033px;top:463px" width="9" height="6"><path d="M0.5 1 L4.5 5 L8.5 1 Z" fill="#333"/></svg>
<div class="ab" style="left:771px;top:157px;width:258px;height:318px;overflow:hidden"><div class="ab" style="left:-771px;top:-157px;width:1069px;height:839px"><svg class="ab" style="left:0;top:0" width="1069" height="839"><defs><linearGradient id="eg" x1="0" y1="0" x2="0" y2="1"><stop offset="0" stop-color="#fff"/><stop offset="1" stop-color="#dcdcdc"/></linearGradient></defs><line x1="779.5" y1="168" x2="779.5" y2="475" stroke="#a0a0a0" stroke-width="1" stroke-dasharray="1,1"/><line x1="798.5" y1="184" x2="798.5" y2="475" stroke="#a0a0a0" stroke-width="1" stroke-dasharray="1,1"/><line x1="817.5" y1="200" x2="817.5" y2="475" stroke="#a0a0a0" stroke-width="1" stroke-dasharray="1,1"/><line x1="836.5" y1="392" x2="836.5" y2="475" stroke="#a0a0a0" stroke-width="1" stroke-dasharray="1,1"/><line x1="784" y1="163.5" x2="790" y2="163.5" stroke="#a0a0a0" stroke-dasharray="1,1"/><rect x="775.5" y="159.5" width="8" height="8" fill="url(#eg)" stroke="#919191" rx="1"/><line x1="777.5" y1="163.5" x2="781.5" y2="163.5" stroke="#203c8c" stroke-width="1"/><circle cx="800.5" cy="163.5" r="6" fill="#fff" stroke="#6e8297" stroke-width="1.8"/><line x1="803" y1="179.5" x2="809" y2="179.5" stroke="#a0a0a0" stroke-dasharray="1,1"/><rect x="794.5" y="175.5" width="8" height="8" fill="url(#eg)" stroke="#919191" rx="1"/><line x1="796.5" y1="179.5" x2="800.5" y2="179.5" stroke="#203c8c" stroke-width="1"/><circle cx="819.5" cy="179.5" r="6" fill="#fff" stroke="#6e8297" stroke-width="1.8"/><line x1="822" y1="195.5" x2="828" y2="195.5" stroke="#a0a0a0" stroke-dasharray="1,1"/><rect x="813.5" y="191.5" width="8" height="8" fill="url(#eg)" stroke="#919191" rx="1"/><line x1="815.5" y1="195.5" x2="819.5" y2="195.5" stroke="#203c8c" stroke-width="1"/><line x1="817.5" y1="193.5" x2="817.5" y2="197.5" stroke="#203c8c" stroke-width="1"/><circle cx="838.5" cy="195.5" r="6" fill="#fff" stroke="#6e8297" stroke-width="1.8"/><line x1="822" y1="211.5" x2="828" y2="211.5" stroke="#a0a0a0" stroke-dasharray="1,1"/><rect x="813.5" y="207.5" width="8" height="8" fill="url(#eg)" stroke="#919191" rx="1"/><line x1="815.5" y1="211.5" x2="819.5" y2="211.5" stroke="#203c8c" stroke-width="1"/><line x1="817.5" y1="209.5" x2="817.5" y2="213.5" stroke="#203c8c" stroke-width="1"/><circle cx="838.5" cy="211.5" r="6" fill="#fff" stroke="#6e8297" stroke-width="1.8"/><line x1="822" y1="227.5" x2="828" y2="227.5" stroke="#a0a0a0" stroke-dasharray="1,1"/><rect x="813.5" y="223.5" width="8" height="8" fill="url(#eg)" stroke="#919191" rx="1"/><line x1="815.5" y1="227.5" x2="819.5" y2="227.5" stroke="#203c8c" stroke-width="1"/><line x1="817.5" y1="225.5" x2="817.5" y2="229.5" stroke="#203c8c" stroke-width="1"/><circle cx="838.5" cy="227.5" r="6" fill="#fff" stroke="#6e8297" stroke-width="1.8"/><line x1="822" y1="243.5" x2="828" y2="243.5" stroke="#a0a0a0" stroke-dasharray="1,1"/><rect x="813.5" y="239.5" width="8" height="8" fill="url(#eg)" stroke="#919191" rx="1"/><line x1="815.5" y1="243.5" x2="819.5" y2="243.5" stroke="#203c8c" stroke-width="1"/><line x1="817.5" y1="241.5" x2="817.5" y2="245.5" stroke="#203c8c" stroke-width="1"/><circle cx="838.5" cy="243.5" r="6" fill="#fff" stroke="#6e8297" stroke-width="1.8"/><line x1="822" y1="259.5" x2="828" y2="259.5" stroke="#a0a0a0" stroke-dasharray="1,1"/><rect x="813.5" y="255.5" width="8" height="8" fill="url(#eg)" stroke="#919191" rx="1"/><line x1="815.5" y1="259.5" x2="819.5" y2="259.5" stroke="#203c8c" stroke-width="1"/><line x1="817.5" y1="257.5" x2="817.5" y2="261.5" stroke="#203c8c" stroke-width="1"/><circle cx="838.5" cy="259.5" r="6" fill="#fff" stroke="#6e8297" stroke-width="1.8"/><line x1="822" y1="275.5" x2="828" y2="275.5" stroke="#a0a0a0" stroke-dasharray="1,1"/><rect x="813.5" y="271.5" width="8" height="8" fill="url(#eg)" stroke="#919191" rx="1"/><line x1="815.5" y1="275.5" x2="819.5" y2="275.5" stroke="#203c8c" stroke-width="1"/><line x1="817.5" y1="273.5" x2="817.5" y2="277.5" stroke="#203c8c" stroke-width="1"/><circle cx="838.5" cy="275.5" r="6" fill="#fff" stroke="#6e8297" stroke-width="1.8"/><line x1="822" y1="291.5" x2="828" y2="291.5" stroke="#a0a0a0" stroke-dasharray="1,1"/><rect x="813.5" y="287.5" width="8" height="8" fill="url(#eg)" stroke="#919191" rx="1"/><line x1="815.5" y1="291.5" x2="819.5" y2="291.5" stroke="#203c8c" stroke-width="1"/><line x1="817.5" y1="289.5" x2="817.5" y2="293.5" stroke="#203c8c" stroke-width="1"/><circle cx="838.5" cy="291.5" r="6" fill="#fff" stroke="#6e8297" stroke-width="1.8"/><line x1="822" y1="307.5" x2="828" y2="307.5" stroke="#a0a0a0" stroke-dasharray="1,1"/><rect x="813.5" y="303.5" width="8" height="8" fill="url(#eg)" stroke="#919191" rx="1"/><line x1="815.5" y1="307.5" x2="819.5" y2="307.5" stroke="#203c8c" stroke-width="1"/><line x1="817.5" y1="305.5" x2="817.5" y2="309.5" stroke="#203c8c" stroke-width="1"/><circle cx="838.5" cy="307.5" r="6" fill="#fff" stroke="#6e8297" stroke-width="1.8"/><line x1="822" y1="323.5" x2="828" y2="323.5" stroke="#a0a0a0" stroke-dasharray="1,1"/><rect x="813.5" y="319.5" width="8" height="8" fill="url(#eg)" stroke="#919191" rx="1"/><line x1="815.5" y1="323.5" x2="819.5" y2="323.5" stroke="#203c8c" stroke-width="1"/><line x1="817.5" y1="321.5" x2="817.5" y2="325.5" stroke="#203c8c" stroke-width="1"/><circle cx="838.5" cy="323.5" r="6" fill="#fff" stroke="#6e8297" stroke-width="1.8"/><line x1="822" y1="339.5" x2="828" y2="339.5" stroke="#a0a0a0" stroke-dasharray="1,1"/><rect x="813.5" y="335.5" width="8" height="8" fill="url(#eg)" stroke="#919191" rx="1"/><line x1="815.5" y1="339.5" x2="819.5" y2="339.5" stroke="#203c8c" stroke-width="1"/><line x1="817.5" y1="337.5" x2="817.5" y2="341.5" stroke="#203c8c" stroke-width="1"/><circle cx="838.5" cy="339.5" r="6" fill="#fff" stroke="#6e8297" stroke-width="1.8"/><line x1="822" y1="355.5" x2="828" y2="355.5" stroke="#a0a0a0" stroke-dasharray="1,1"/><rect x="813.5" y="351.5" width="8" height="8" fill="url(#eg)" stroke="#919191" rx="1"/><line x1="815.5" y1="355.5" x2="819.5" y2="355.5" stroke="#203c8c" stroke-width="1"/><line x1="817.5" y1="353.5" x2="817.5" y2="357.5" stroke="#203c8c" stroke-width="1"/><circle cx="838.5" cy="355.5" r="6" fill="#fff" stroke="#6e8297" stroke-width="1.8"/><line x1="822" y1="371.5" x2="828" y2="371.5" stroke="#a0a0a0" stroke-dasharray="1,1"/><rect x="813.5" y="367.5" width="8" height="8" fill="url(#eg)" stroke="#919191" rx="1"/><line x1="815.5" y1="371.5" x2="819.5" y2="371.5" stroke="#203c8c" stroke-width="1"/><line x1="817.5" y1="369.5" x2="817.5" y2="373.5" stroke="#203c8c" stroke-width="1"/><circle cx="838.5" cy="371.5" r="6" fill="#fff" stroke="#6e8297" stroke-width="1.8"/><line x1="822" y1="387.5" x2="828" y2="387.5" stroke="#a0a0a0" stroke-dasharray="1,1"/><rect x="813.5" y="383.5" width="8" height="8" fill="url(#eg)" stroke="#919191" rx="1"/><line x1="815.5" y1="387.5" x2="819.5" y2="387.5" stroke="#203c8c" stroke-width="1"/><circle cx="838.5" cy="387.5" r="6" fill="#fff" stroke="#6e8297" stroke-width="1.8"/><line x1="836" y1="403.5" x2="847" y2="403.5" stroke="#a0a0a0" stroke-dasharray="1,1"/><circle cx="857.5" cy="403.5" r="6" fill="#fff" stroke="#6e8297" stroke-width="1.8"/><line x1="836" y1="419.5" x2="847" y2="419.5" stroke="#a0a0a0" stroke-dasharray="1,1"/><circle cx="857.5" cy="419.5" r="6" fill="#fff" stroke="#6e8297" stroke-width="1.8"/><line x1="841" y1="435.5" x2="847" y2="435.5" stroke="#a0a0a0" stroke-dasharray="1,1"/><rect x="832.5" y="431.5" width="8" height="8" fill="url(#eg)" stroke="#919191" rx="1"/><line x1="834.5" y1="435.5" x2="838.5" y2="435.5" stroke="#203c8c" stroke-width="1"/><line x1="836.5" y1="433.5" x2="836.5" y2="437.5" stroke="#203c8c" stroke-width="1"/><circle cx="857.5" cy="435.5" r="6" fill="#fff" stroke="#6e8297" stroke-width="1.8"/><line x1="836" y1="451.5" x2="847" y2="451.5" stroke="#a0a0a0" stroke-dasharray="1,1"/><circle cx="857.5" cy="451.5" r="6" fill="#fff" stroke="#6e8297" stroke-width="1.8"/><line x1="841" y1="467.5" x2="847" y2="467.5" stroke="#a0a0a0" stroke-dasharray="1,1"/><rect x="832.5" y="463.5" width="8" height="8" fill="url(#eg)" stroke="#919191" rx="1"/><line x1="834.5" y1="467.5" x2="838.5" y2="467.5" stroke="#203c8c" stroke-width="1"/><line x1="836.5" y1="465.5" x2="836.5" y2="469.5" stroke="#203c8c" stroke-width="1"/><circle cx="857.5" cy="467.5" r="6" fill="#fff" stroke="#6e8297" stroke-width="1.8"/></svg></div></div>
<div class="t" style="left:813px;top:155px;height:16px;line-height:16px;font-size:10.6px;color:#000">MGEDOntology</div>
<div class="t" style="left:832px;top:171px;height:16px;line-height:16px;font-size:10.6px;color:#000">MGEDCoreOntology</div>
<div class="t" style="left:851px;top:187px;height:16px;line-height:16px;font-size:10.6px;color:#000">ArrayDesignPackage</div>
<div class="t" style="left:851px;top:203px;height:16px;line-height:16px;font-size:10.6px;color:#000">ArrayPackage</div>
<div class="t" style="left:851px;top:219px;height:16px;line-height:16px;font-size:10.6px;color:#000">AuditAndSecurityPackage</div>
<div class="t" style="left:851px;top:235px;height:16px;line-height:16px;font-size:10.6px;color:#000">BioAssayPackage</div>
<div class="t" style="left:851px;top:251px;height:16px;line-height:16px;font-size:10.6px;color:#000">BioMaterialPackage</div>
<div class="t" style="left:851px;top:267px;height:16px;line-height:16px;font-size:10.6px;color:#000">BioSequencePackage</div>
<div class="t" style="left:851px;top:283px;height:16px;line-height:16px;font-size:10.6px;color:#000">CancerSite</div>
<div class="t" style="left:851px;top:299px;height:16px;line-height:16px;font-size:10.6px;color:#000">DataType</div>
<div class="t" style="left:851px;top:315px;height:16px;line-height:16px;font-size:10.6px;color:#000">DeprecatedTerms</div>
<div class="t" style="left:851px;top:331px;height:16px;line-height:16px;font-size:10.6px;color:#000">DeprecationReason</div>
<div class="t" style="left:851px;top:347px;height:16px;line-height:16px;font-size:10.6px;color:#000">DescriptionPackage</div>
<div class="t" style="left:851px;top:363px;height:16px;line-height:16px;font-size:10.6px;color:#000">DesignElementPackage</div>
<div class="t" style="left:851px;top:379px;height:16px;line-height:16px;font-size:10.6px;color:#000">ExperimentPackage</div>
<div class="t" style="left:870px;top:395px;height:16px;line-height:16px;font-size:10.6px;color:#000">Experiment</div>
<div class="t" style="left:870px;top:411px;height:16px;line-height:16px;font-size:10.6px;color:#000">ExperimentalFactor</div>
<div class="t" style="left:870px;top:427px;height:16px;line-height:16px;font-size:10.6px;color:#000">ExperimentalFactorCategory</div>
<div class="t" style="left:870px;top:443px;height:16px;line-height:16px;font-size:10.6px;color:#000">ExperimentDesign</div>
<div class="ab" style="left:870px;top:459px;width:114px;height:16px;background:#3399ff"></div>
<div class="t" style="left:870px;top:459px;height:16px;line-height:16px;font-size:10.6px;color:#fff">ExperimentDesignType</div>
<div class="t" style="left:751px;top:486px;height:14px;line-height:14px;font-size:10.3px;font-weight:bold;color:#6d7f96">VALUE TYPE AND PROPERTY</div>
<div class="ab" style="left:768px;top:504px;width:281px;height:20px;border:1px solid #acacac;border-radius:2px;background:linear-gradient(180deg,#f2f2f2 0,#ebebeb 50%,#dddddd 51%,#cfcfcf 100%)"></div>
<div class="t" style="left:771px;top:507px;height:14px;line-height:14px;font-size:10.5px;color:#000">Direct subclasses</div>
<svg class="ab" style="left:1035px;top:513px" width="9" height="5"><path d="M0.5 0.5 L4.5 4.5 L8.5 0.5 Z" fill="#222"/></svg>
<div class="ab" style="left:772px;top:529px;width:13px;height:13px;border:1px solid #8f8f8f;background:linear-gradient(135deg,#dcdcdc,#fff)"></div>
<svg class="ab" style="left:774px;top:531px" width="10" height="10"><path d="M1.6 5.2 L4.1 8.3 L8.4 1.2" stroke="#3a5a9e" stroke-width="1.9" fill="none" stroke-linejoin="round"/></svg>
<div class="t" style="left:789px;top:528px;height:14px;line-height:14px;font-size:10.5px;color:#000">Include a property</div>
<div class="ab" style="left:768px;top:548px;width:281px;height:19px;border:1px solid #3c7fb1;border-radius:2px;background:linear-gradient(180deg,#e8f5fd 0,#d3ecfa 50%,#acdbf6 51%,#86c7ee 100%)"></div>
<div class="t" style="left:771px;top:550px;height:14px;line-height:14px;font-size:10.5px;color:#000">class_role</div>
<svg class="ab" style="left:1035px;top:557px" width="9" height="5"><path d="M0.5 0.5 L4.5 4.5 L8.5 0.5 Z" fill="#222"/></svg>
<div class="t" style="left:751px;top:580px;height:14px;line-height:14px;font-size:10.3px;font-weight:bold;color:#6d7f96">ALLOWED VALUES</div>
<div class="ab" style="left:768px;top:597px;width:281px;height:181px;border:1px solid #c2c2c2;background:#fff"></div>
<svg class="ab" style="left:772px;top:692px" width="17" height="17"><circle cx="8.5" cy="8.5" r="6" fill="#fff" stroke="#6e8297" stroke-width="1.8"/></svg>
<div class="t" style="left:793px;top:692px;height:16px;line-height:16px;font-size:10.6px;color:#000">PerturbationalDesign</div>
<svg class="ab" style="left:772px;top:713px" width="17" height="17"><circle cx="8.5" cy="8.5" r="6" fill="#fff" stroke="#6e8297" stroke-width="1.8"/></svg>
<div class="t" style="left:793px;top:713px;height:16px;line-height:16px;font-size:10.6px;color:#000">TechnologicalDesign</div>
<div class="ab" style="left:768px;top:567px;width:281px;height:130px;border:1px solid #000;background:#fff"></div>
<div class="t" style="left:770px;top:568px;height:16px;line-height:16px;font-size:10.8px;color:#000">class_role</div>
<div class="t" style="left:770px;top:584px;height:16px;line-height:16px;font-size:10.8px;color:#000">class_source</div>
<div class="t" style="left:770px;top:600px;height:16px;line-height:16px;font-size:10.8px;color:#000">deprecated_from_version</div>
<div class="t" style="left:770px;top:616px;height:16px;line-height:16px;font-size:10.8px;color:#000">deprecation_in_version</div>
<div class="t" style="left:770px;top:632px;height:16px;line-height:16px;font-size:10.8px;color:#000">deprecation_old_parent</div>
<div class="t" style="left:770px;top:648px;height:16px;line-height:16px;font-size:10.8px;color:#000">deprecation_old_restriction</div>
<div class="ab" style="left:769px;top:664px;width:262px;height:16px;background:#3399ff"></div>
<div class="t" style="left:770px;top:664px;height:16px;line-height:16px;font-size:10.8px;color:#fff">deprecation_reason</div>
<div class="t" style="left:770px;top:680px;height:16px;line-height:16px;font-size:10.8px;color:#000">deprecation_replacement_term</div>
<div class="ab" style="left:1031px;top:568px;width:17px;height:128px;background:linear-gradient(90deg,#ececec,#f3f3f3 50%,#ececec)"></div>
<svg class="ab" style="left:1036px;top:575px" width="8" height="5"><path d="M0 4.5 L4 0.5 L8 4.5 Z" fill="#2a2a2a"/></svg>
<div class="ab" style="left:1032px;top:586px;width:15px;height:6px;border:1px solid #8b8b8b;border-radius:2px;background:linear-gradient(180deg,#f6f6f6,#d6d6d6)"></div>
<svg class="ab" style="left:1036px;top:686px" width="8" height="5"><path d="M0 0.5 L4 4.5 L8 0.5 Z" fill="#2a2a2a"/></svg>
<div class="ab" style="left:991px;top:796px;width:57px;height:21px;border:1px solid #707070;border-radius:3px;background:linear-gradient(180deg,#f2f2f2 0,#ebebeb 50%,#dddddd 51%,#cfcfcf 100%)"></div>
<div class="t" style="left:991px;top:799px;width:57px;height:14px;line-height:14px;font-size:11px;color:#000;text-align:center">Apply</div>
</body></html>
